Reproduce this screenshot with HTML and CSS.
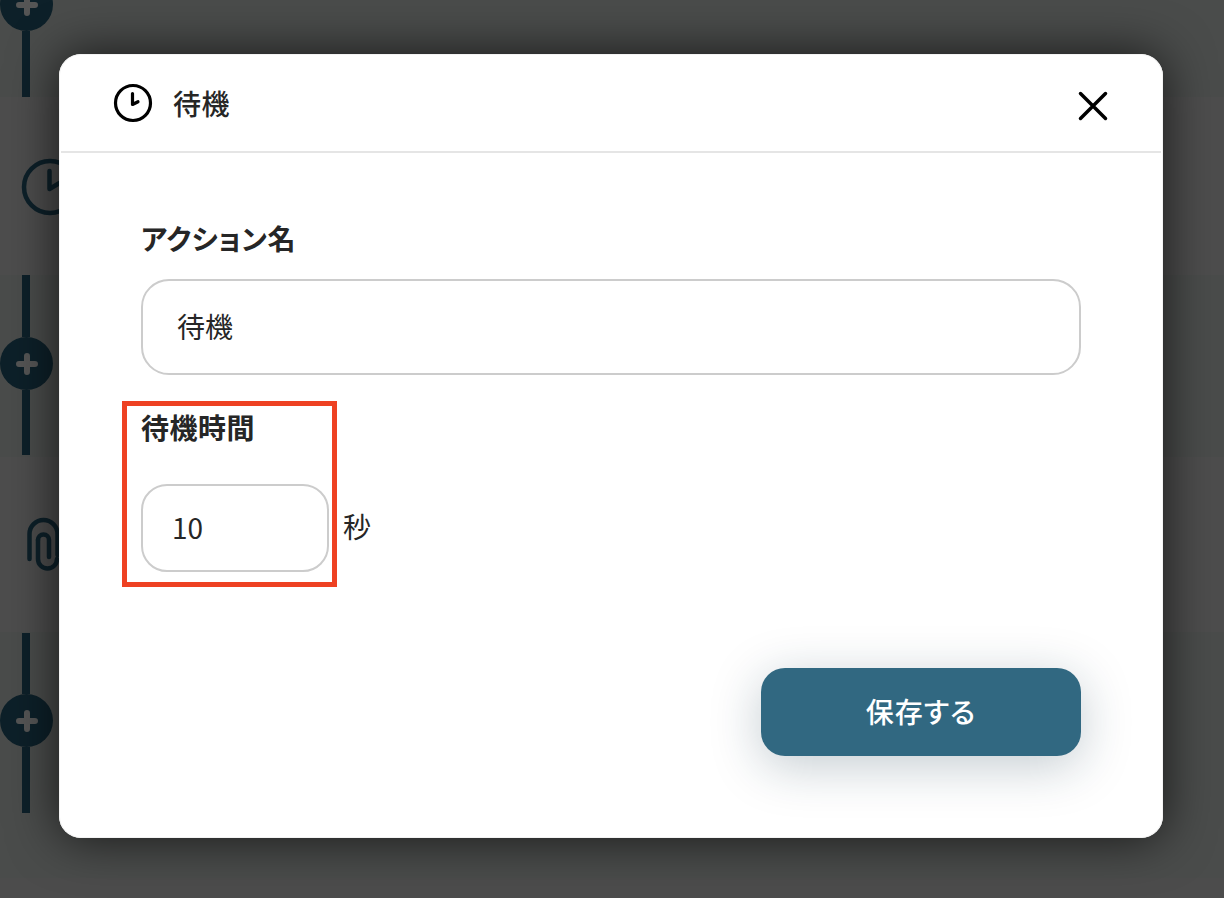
FILE: index.html
```html
<!DOCTYPE html>
<html lang="ja">
<head>
<meta charset="utf-8">
<title>待機</title>
<link rel="stylesheet" href="styles.css">
</head>
<body>
<div class="flow">
  <section class="band band-a">
    <div class="add"><svg viewBox="0 0 24 24" class="plus"><path d="M12 4v16M4 12h16"/></svg></div>
    <div class="line line-long"></div>
  </section>
  <section class="band band-b">
    <svg class="node-icon clock-bg" viewBox="0 0 60 60"><circle cx="29" cy="29" r="26"/><path d="M28.500 13v18l10-6"/></svg>
  </section>
  <section class="band band-c">
    <div class="line line-62"></div>
    <div class="add"><svg viewBox="0 0 24 24" class="plus"><path d="M12 4v16M4 12h16"/></svg></div>
    <div class="line line-65"></div>
  </section>
  <section class="band band-d">
    <svg class="node-icon clip-bg" viewBox="0 0 40 60"><path d="M4.500 44V19a14 14 0 0 1 28 0V40"/><path d="M13 25a5.500 5.500 0 0 1 11 0V42"/><path d="M13 25V44a9.500 9.500 0 0 0 19 0"/></svg>
  </section>
  <section class="band band-e">
    <div class="line line-61"></div>
    <div class="add"><svg viewBox="0 0 24 24" class="plus"><path d="M12 4v16M4 12h16"/></svg></div>
    <div class="line line-long"></div>
  </section>
</div>

<div class="modal">
  <header class="modal-head">
    <div class="head-left">
      <svg class="clock" viewBox="0 0 40 40"><circle cx="20" cy="20" r="17.500"/><path d="M19.500 10.500v11l5.500-2.800"/></svg>
      <h1 class="title">待機</h1>
    </div>
    <svg class="close" viewBox="0 0 32 32"><path d="M3.500 3.500l25 25M28.500 3.500l-25 25"/></svg>
  </header>
  <div class="modal-body">
    <label class="label">アクション名</label>
    <div class="input input-wide">待機</div>
    <div class="wait-row">
      <div class="highlight">
        <label class="label">待機時間</label>
        <div class="input input-num">10</div>
      </div>
      <span class="unit">秒</span>
    </div>
    <div class="actions"><button class="save">保存する</button></div>
  </div>
</div>
</body>
</html>
```
FILE: styles.css
```css
* { box-sizing: border-box; }
html, body { margin: 0; height: 100%; }
body {
  position: relative;
  width: 1224px;
  height: 898px;
  overflow: hidden;
  background: #4c4c4c;
  font-family: "Noto Sans CJK JP", "Noto Sans", sans-serif;
  color: #262626;
  font-feature-settings: "palt";
}
.flow { display: flex; flex-direction: column; height: 898px; }
.band { display: flex; flex-direction: column; flex: none; }
.band-a { height: 119px; margin-top: -22px; background: #4a4c4b; }
.band-b { height: 178px; background: #4d4d4d; }
.band-c { height: 182px; background: #4a4c4b; }
.band-d { height: 175px; background: #4d4d4d; }
.band-e { height: 246px; padding-top: 1px; background: #4a4c4b; }
.line { width: 8px; margin-left: 22px; background: #0d2029; flex: none; }
.line-long { height: 66px; }
.line-62 { height: 62px; }
.line-65 { height: 65px; }
.line-61 { height: 61px; }
.add {
  width: 53px; height: 53px; flex: none;
  border-radius: 50%; background: #0d2029;
  display: flex; align-items: center; justify-content: center;
}
.plus { width: 24px; height: 24px; fill: none; stroke: #555; stroke-width: 6; stroke-linecap: round; }
.node-icon { fill: none; stroke: #0d2029; stroke-linecap: round; stroke-linejoin: round; flex: none; }
.clock-bg { width: 60px; height: 60px; margin: 61px 0 0 21px; stroke-width: 4.500; }
.clip-bg { width: 40px; height: 60px; margin: 58px 0 0 25px; stroke-width: 4.500; }

.modal {
  position: absolute;
  left: 59px; top: 54px;
  width: 1104px; height: 784px;
  background: #fff;
  border-radius: 22px;
  box-shadow: inset 0 0 0 1px #f3f3f3, 0 0 50px rgba(0, 0, 0, .7);
}
.modal-head {
  height: 99px;
  border-bottom: 2px solid #e5e5e5;
  margin: 0 2px;
  display: flex; align-items: center; justify-content: space-between;
  padding: 0 52px 0 52px;
}
.head-left { display: flex; align-items: center; gap: 20px; }
.clock { width: 40px; height: 40px; fill: none; stroke: #000; stroke-width: 3.200; stroke-linecap: round; stroke-linejoin: round; }
.title { margin: 0; font-size: 28px; font-weight: 500; line-height: 40px; letter-spacing: .5px; }
.close { width: 32px; height: 32px; margin-top: 6px; fill: none; stroke: #000; stroke-width: 3.500; stroke-linecap: round; }
.modal-body { padding: 65px 82px 0; }
.label { display: block; font-size: 28px; font-weight: 700; line-height: 40px; letter-spacing: .5px; }
.input {
  border: 2px solid #ccc; background: #fff;
  font-size: 28px; display: flex; align-items: center;
  padding-bottom: 3px;
}
.input-wide { width: 940px; height: 96px; margin-top: 21px; border-radius: 28px; padding-left: 34px; }
.wait-row { display: flex; align-items: center; margin: 26px 0 0 -19px; }
.highlight {
  width: 215px; height: 186px; flex: none;
  border: 5px solid #ee4122;
  padding: 1px 0 0 14px;
}
.input-num { width: 188px; height: 88px; margin-top: 37px; border-radius: 26px; padding-left: 29px; }
.unit { font-size: 28px; margin-left: 6px; position: relative; top: 32px; }
.actions { display: flex; justify-content: flex-end; margin-top: 81px; }
.save {
  width: 320px; height: 88px; border: 0; border-radius: 24px;
  padding: 0 0 3px;
  background: #316881; color: #fff;
  font: 500 28px "Noto Sans CJK JP", sans-serif;
  font-feature-settings: "palt";
  letter-spacing: 1px;
  box-shadow: 0 10px 50px rgba(20, 50, 70, .25);
}
```
